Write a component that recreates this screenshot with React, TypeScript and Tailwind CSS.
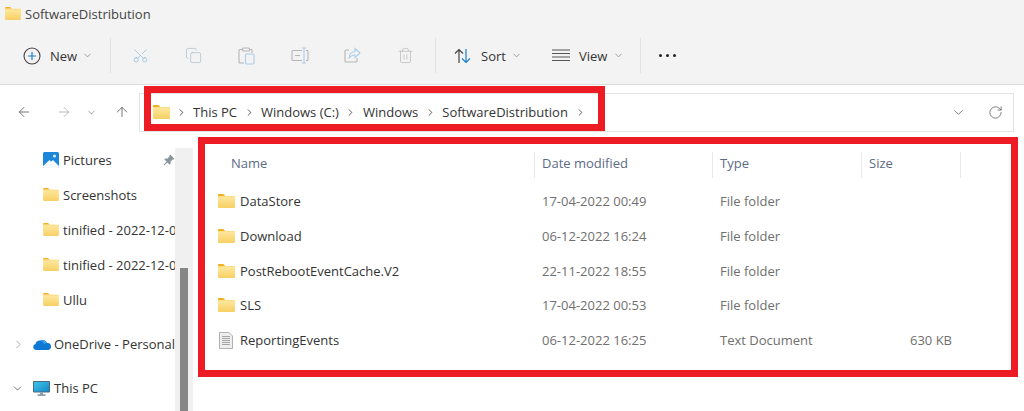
import { ChevronDown, ChevronRight, ArrowLeft, ArrowRight, ArrowUp, RotateCw, Scissors, Copy, Trash2 } from "lucide-react";

const Folder = ({ size = 17 }: { size?: number }) => (
  <svg width={size} height={Math.round(size * 0.82)} viewBox="0 0 17 14" className="shrink-0">
    <defs>
      <linearGradient id="fold" x1="0" y1="0" x2="0" y2="1">
        <stop offset="0" stopColor="#fde9a0" />
        <stop offset="1" stopColor="#f8cf64" />
      </linearGradient>
    </defs>
    <path d="M0 1.2C0 .5.5 0 1.2 0h3.6c.5 0 .9.2 1.2.5L7.2 2H0z" fill="#f2b01e" />
    <rect x="0" y="2" width="17" height="12" rx="1" fill="url(#fold)" />
    <rect x="0" y="2" width="17" height="1" fill="#fbdd85" />
  </svg>
);

const Chev = ({ className = "" }: { className?: string }) => (
  <ChevronDown size={11} strokeWidth={1.5} className={`text-[#7a7a7a] ${className}`} />
);

const Crumb = ({ children }: { children?: string }) => (
  <>
    <ChevronRight size={11} strokeWidth={2} className="text-[#555] shrink-0" />
    {children && <span>{children}</span>}
  </>
);

const Sep = () => <div className="w-px h-[35px] bg-[#e2e2e2]" />;

const Paste = () => (
  <svg width="17" height="18" viewBox="0 0 17 18" fill="none" strokeWidth="1.1">
    <path d="M5 2.5H2a1 1 0 0 0-1 1V15a1 1 0 0 0 1 1h4M11 2.5h2a1 1 0 0 1 1 1V6" stroke="#b5b5b5" />
    <rect x="4.5" y="1" width="7" height="3" rx="1" stroke="#b5b5b5" />
    <rect x="7.5" y="7" width="8.5" height="10" rx="1.2" stroke="#a9cdec" />
  </svg>
);

const Rename = () => (
  <svg width="18" height="17" viewBox="0 0 18 17" fill="none" strokeWidth="1.1">
    <path d="M11 3.5H2a1 1 0 0 0-1 1v8a1 1 0 0 0 1 1h9M15 3.5h1.5a1 1 0 0 1 .5 1v8a1 1 0 0 1-1 1H15" stroke="#b5b5b5" />
    <path d="M4 8.5h5" stroke="#b5b5b5" />
    <path d="M13 1v15M11 1h4M11 16h4" stroke="#a9cdec" />
  </svg>
);

const Share = () => (
  <svg width="17" height="17" viewBox="0 0 17 17" fill="none" strokeWidth="1.1">
    <path d="M5 3H2a1 1 0 0 0-1 1v10a1 1 0 0 0 1 1h10a1 1 0 0 0 1-1v-3" stroke="#b5b5b5" />
    <path d="M11 1.5 16 6l-5 4.5V8C8 8 6.5 9 5 11.5 5.3 7.5 7.5 4.8 11 4.5z" stroke="#a9cdec" />
  </svg>
);

const NewIcon = () => (
  <svg width="18" height="18" viewBox="0 0 18 18" fill="none">
    <circle cx="9" cy="9" r="8" stroke="#444" strokeWidth="1.1" />
    <path d="M9 5v8M5 9h8" stroke="#1a7fd4" strokeWidth="1.2" />
  </svg>
);

const SortIcon = () => (
  <svg width="18" height="16" viewBox="0 0 18 16" fill="none" strokeWidth="1.2">
    <path d="M5 15V1.5M1 5.5l4-4 4 4" stroke="#444" />
    <path d="M12 1v13.5M8 10.5l4 4 4-4" stroke="#1a7fd4" />
  </svg>
);

const ViewIcon = () => (
  <svg width="18" height="13" viewBox="0 0 18 13" fill="none" stroke="#555" strokeWidth="1">
    <path d="M0 1h18M0 4.5h18M0 8h18M0 11.5h18" />
  </svg>
);

const Dots = () => (
  <div className="flex gap-[4px]">
    <div className="w-[3px] h-[3px] rounded-full bg-[#222]" />
    <div className="w-[3px] h-[3px] rounded-full bg-[#222]" />
    <div className="w-[3px] h-[3px] rounded-full bg-[#222]" />
  </div>
);

const PicturesIcon = () => (
  <svg width="16" height="16" viewBox="0 0 16 16" className="shrink-0">
    <rect width="16" height="16" rx="1.5" fill="#1c86d8" />
    <path d="M0 14 6.5 8 8 9.5 10 8l6 6v.5a1.5 1.5 0 0 1-1.5 1.5h-13A1.5 1.5 0 0 1 0 14.5z" fill="#f4f9fd" />
    <circle cx="11.5" cy="4" r="1.6" fill="#cfe8fa" />
  </svg>
);

const Cloud = () => (
  <svg width="18" height="12" viewBox="0 0 18 12" className="shrink-0">
    <path d="M3 12a3 3 0 0 1-.5-5.9A4.5 4.5 0 0 1 7 2.5 5 5 0 0 1 14 5a3.5 3.5 0 0 1 1 7z" fill="#0f78d4" />
    <path d="M6.5 3.2A5 5 0 0 1 14 5a3 3 0 0 0-3 1.6A3.6 3.6 0 0 0 6.5 3.2z" fill="#38a3ea" />
  </svg>
);

const Monitor = () => (
  <svg width="17" height="15" viewBox="0 0 17 15" className="shrink-0">
    <defs>
      <linearGradient id="scr" x1="0" y1="0" x2="1" y2="1">
        <stop offset="0" stopColor="#3fc3ea" />
        <stop offset="1" stopColor="#1689c7" />
      </linearGradient>
    </defs>
    <rect x="0" y="0" width="17" height="11.5" rx="1" fill="#4a6a80" />
    <rect x="1" y="1" width="15" height="9.5" fill="url(#scr)" />
    <rect x="7" y="11.5" width="3" height="2" fill="#8a9aa6" />
    <rect x="4.5" y="13.5" width="8" height="1.2" fill="#5d7688" />
  </svg>
);

const Pin = () => (
  <svg width="12" height="12" viewBox="0 0 12 12" className="shrink-0">
    <path d="M7.2.6 11.4 4.8 10.5 5.6 9.7 5.4 7.6 7.5 7.6 9.7 6.6 10.7 4.4 8.4 1.2 11.4.6 10.8 3.6 7.6 1.3 5.4 2.3 4.4 4.5 4.4 6.6 2.3 6.4 1.5z" fill="#8b959c" />
  </svg>
);

const TextDoc = () => (
  <svg width="14" height="17" viewBox="0 0 14 17" fill="none" className="shrink-0">
    <path d="M.5.5h9.5l3.5 3.5v12.5H.5z" fill="#eeeeee" stroke="#b0b0b0" />
    <path d="M3 4.5h8M3 6.5h8M3 8.5h8M3 10.5h8M3 12.5h8" stroke="#a5a5a5" />
  </svg>
);

const files = [
  { name: "DataStore", date: "17-04-2022 00:49", type: "File folder", size: "" },
  { name: "Download", date: "06-12-2022 16:24", type: "File folder", size: "" },
  { name: "PostRebootEventCache.V2", date: "22-11-2022 18:55", type: "File folder", size: "" },
  { name: "SLS", date: "17-04-2022 00:53", type: "File folder", size: "" },
  { name: "ReportingEvents", date: "06-12-2022 16:25", type: "Text Document", size: "630 KB" },
];

const quickAccess = ["Screenshots", "tinified - 2022-12-06T10", "tinified - 2022-12-06T11", "Ullu"];

export default function App() {
  return (
    <div className="relative w-[1024px] h-[411px] overflow-hidden bg-white text-[13px] leading-[18px] text-[#333] font-['Open_Sans',sans-serif]">
      {/* title + command bar */}
      <div className="h-[85px] bg-[#f3f3f3] border-b border-[#dedede]">
        <div className="h-[27px] flex items-center gap-[4px] pl-[5px] text-[#444]">
          <Folder size={16} />
          <span className="text-[13px]">SoftwareDistribution</span>
        </div>
        <div className="h-[57px] flex items-center pl-[23px]">
          <NewIcon />
          <span className="ml-[9px] w-[28px]">New</span>
          <Chev className="ml-[4px]" />
          <div className="ml-[17px]"><Sep /></div>
          <div className="ml-[21px] w-[18px]"><Scissors size={17} strokeWidth={1} className="text-[#8bb9de] -rotate-90" /></div>
          <div className="ml-[35px] w-[18px]"><Copy size={17} strokeWidth={1} className="text-[#a9bccb]" /></div>
          <div className="ml-[35px] w-[18px]"><Paste /></div>
          <div className="ml-[35px] w-[18px]"><Rename /></div>
          <div className="ml-[35px] w-[18px]"><Share /></div>
          <div className="ml-[35px] w-[18px]"><Trash2 size={17} strokeWidth={1} className="text-[#b8b8b8]" /></div>
          <div className="ml-[20px]"><Sep /></div>
          <div className="ml-[18px]"><SortIcon /></div>
          <span className="ml-[9px] w-[26px]">Sort</span>
          <Chev className="ml-[4px]" />
          <div className="ml-[30px]"><ViewIcon /></div>
          <span className="ml-[9px] w-[29px]">View</span>
          <Chev className="ml-[5px]" />
          <div className="ml-[16px]"><Sep /></div>
          <div className="ml-[18px]"><Dots /></div>
        </div>
      </div>

      {/* address row */}
      <div className="h-[54px] flex items-center pl-[16px]">
        <ArrowLeft size={16} strokeWidth={1.2} className="text-[#555]" />
        <ArrowRight size={16} strokeWidth={1.2} className="text-[#aaa] ml-[24px]" />
        <Chev className="ml-[14px]" />
        <ArrowUp size={16} strokeWidth={1.2} className="text-[#555] ml-[17px]" />
        <div className="ml-[9px] mr-[10px] flex-1 h-[39px] border border-[#e3e3e3] flex items-center pl-[13px] pr-[10px]">
          <Folder size={17} />
          <div className="ml-[6px]"><Crumb /></div>
          <span className="ml-[6px]">This PC</span>
          <div className="ml-[7px]"><Crumb /></div>
          <span className="ml-[6px]">Windows (C:)</span>
          <div className="ml-[6px]"><Crumb /></div>
          <span className="ml-[7px]">Windows</span>
          <div className="ml-[7px]"><Crumb /></div>
          <span className="ml-[6px]">SoftwareDistribution</span>
          <div className="ml-[7px]"><Crumb /></div>
          <ChevronDown size={15} strokeWidth={1.2} className="text-[#555] ml-auto" />
          <RotateCw size={15} strokeWidth={1.2} className="text-[#555] ml-[22px]" />
        </div>
      </div>

      <div className="flex h-[272px]">
        {/* nav pane */}
        <div className="w-[175px] overflow-hidden shrink-0 whitespace-nowrap pt-[3px]">
          <div className="h-[35px] flex items-center pl-[43px] gap-[4px]">
            <PicturesIcon />
            <span className="w-[97px]">Pictures</span>
            <Pin />
          </div>
          {quickAccess.map((q, i) => (
            <div key={i} className="h-[35px] flex items-center pl-[43px] gap-[4px]">
              <Folder size={16} />
              <span>{q}</span>
            </div>
          ))}
          <div className="h-[44px] mt-[5px] flex items-center pl-[12px]">
            <ChevronRight size={13} strokeWidth={1.3} className="text-[#888]" />
            <div className="ml-[8px]"><Cloud /></div>
            <span className="ml-[3px]">OneDrive - Personal</span>
          </div>
          <div className="h-[44px] flex items-center pl-[11px]">
            <ChevronDown size={13} strokeWidth={1.3} className="text-[#444]" />
            <div className="ml-[9px]"><Monitor /></div>
            <span className="ml-[4px]">This PC</span>
          </div>
        </div>

        {/* nav scrollbar */}
        <div className="w-[18px] bg-[#f0f0f0] flex justify-center items-end mt-[9px]">
          <div className="w-[8px] h-[143px] bg-[#868686]" />
        </div>

        {/* file list */}
        <div className="flex-1 pl-[25px] pt-[13px]">
          <div className="flex h-[26px] text-[#5c6b85] ">
            <div className="w-[316px] pl-[13px] mt-[2px] ml-[0px]">Name</div>
            <div className="w-[178px] border-l border-[#e8e8e8] pl-[7px] pt-[2px]">Date modified</div>
            <div className="w-[149px] border-l border-[#e8e8e8] pl-[7px] pt-[2px]">Type</div>
            <div className="w-[100px] border-x border-[#e8e8e8] pl-[7px] pt-[2px]">Size</div>
          </div>
          <div className="mt-[6px]">
            {files.map((f) => (
              <div key={f.name} className="flex h-[34.7px] items-center text-[#6f6f6f]">
                <div className="w-[316px] flex items-center gap-[5px] text-[#333]">
                  {f.size ? <div className="ml-[1px] mr-[2px]"><TextDoc /></div> : <Folder size={17} />}
                  <span>{f.name}</span>
                </div>
                <div className="w-[178px] pl-[8px]">{f.date}</div>
                <div className="w-[149px] pl-[8px]">{f.type}</div>
                <div className="w-[91px] text-right">{f.size}</div>
              </div>
            ))}
          </div>
        </div>
      </div>

      {/* red callouts drawn on top of the screenshot */}
      <div className="absolute left-[144px] top-[86px] w-[461px] h-[45px] border-[7px] border-[#ed1c24]" />
      <div className="absolute left-[198px] top-[137px] w-[820px] h-[240px] border-[7px] border-[#ed1c24]" />
    </div>
  );
}
